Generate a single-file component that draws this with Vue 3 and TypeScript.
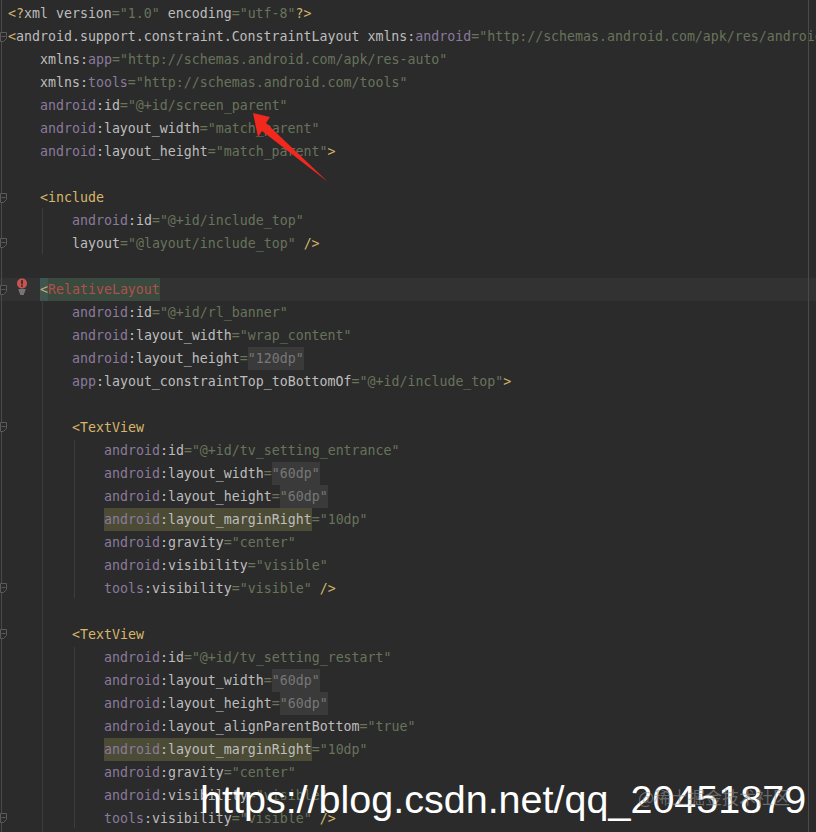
<script setup lang="ts">
type Tok = { cls: string; text: string }
type Line = { indent: number; toks: Tok[]; caret?: boolean }

const tk = (cls: string, text: string): Tok => ({ cls, text })

function attr(indent: number, ns: string, name: string, val: string, end = '', opts: { box?: boolean; warn?: boolean } = {}): Line {
  const toks: Tok[] = []
  if (ns === 'xmlns') {
    toks.push(tk('attr', 'xmlns:'), tk('ns', name))
  } else if (ns) {
    if (opts.warn) {
      toks.push(tk('ns warn', ns), tk('attr warn', ':' + name))
    } else {
      toks.push(tk('ns', ns), tk('attr', ':' + name))
    }
  } else {
    toks.push(tk('attr', name))
  }
  toks.push(tk('str', '='))
  toks.push(tk(opts.box ? 'box' : 'str', `"${val}"`))
  if (end) toks.push(tk('tag', end))
  return { indent, toks }
}
const open = (indent: number, name: string): Line => ({ indent, toks: [tk('tag', '<' + name)] })
const blank = (): Line => ({ indent: 0, toks: [] })

const lines: Line[] = [
  {
    indent: 0,
    toks: [
      tk('tag', '<?'), tk('attr', 'xml version'), tk('str', '="1.0"'), tk('attr', ' encoding'), tk('str', '="utf-8"'), tk('tag', '?>'),
    ],
  },
  {
    indent: 0,
    toks: [
      tk('tag', '<'), tk('attr', 'android.support.constraint.ConstraintLayout xmlns:'), tk('ns', 'android'),
      tk('str', '="http://schemas.android.com/apk/res/android"'),
    ],
  },
  attr(4, 'xmlns', 'app', 'http://schemas.android.com/apk/res-auto'),
  attr(4, 'xmlns', 'tools', 'http://schemas.android.com/tools'),
  attr(4, 'android', 'id', '@+id/screen_parent'),
  attr(4, 'android', 'layout_width', 'match_parent'),
  attr(4, 'android', 'layout_height', 'match_parent', '>'),
  blank(),
  open(4, 'include'),
  attr(8, 'android', 'id', '@+id/include_top'),
  attr(8, '', 'layout', '@layout/include_top', ' />'),
  blank(),
  { indent: 4, caret: true, toks: [tk('match', '<'), tk('err', 'RelativeLayout')] },
  attr(8, 'android', 'id', '@+id/rl_banner'),
  attr(8, 'android', 'layout_width', 'wrap_content'),
  attr(8, 'android', 'layout_height', '120dp', '', { box: true }),
  attr(8, 'app', 'layout_constraintTop_toBottomOf', '@+id/include_top', '>'),
  blank(),
  open(8, 'TextView'),
  attr(12, 'android', 'id', '@+id/tv_setting_entrance'),
  attr(12, 'android', 'layout_width', '60dp', '', { box: true }),
  attr(12, 'android', 'layout_height', '60dp', '', { box: true }),
  attr(12, 'android', 'layout_marginRight', '10dp', '', { warn: true }),
  attr(12, 'android', 'gravity', 'center'),
  attr(12, 'android', 'visibility', 'visible'),
  attr(12, 'tools', 'visibility', 'visible', ' />'),
  blank(),
  open(8, 'TextView'),
  attr(12, 'android', 'id', '@+id/tv_setting_restart'),
  attr(12, 'android', 'layout_width', '60dp', '', { box: true }),
  attr(12, 'android', 'layout_height', '60dp', '', { box: true }),
  attr(12, 'android', 'layout_alignParentBottom', 'true'),
  attr(12, 'android', 'layout_marginRight', '10dp', '', { warn: true }),
  attr(12, 'android', 'gravity', 'center'),
  attr(12, 'android', 'visibility', 'visible'),
  attr(12, 'tools', 'visibility', 'visible', ' />'),
]

const foldMarks = [37, 198, 243, 290, 427, 588, 634, 818].map((y) => ({ y: y - 5 }))
const guides = [
  { x: 42, top: 208, height: 46 },
  { x: 42, top: 300, height: 532 },
  { x: 74, top: 440, height: 158 },
  { x: 74, top: 647, height: 181 },
]
</script>

<template>
  <div class="editor">
    <div class="code">
      <div
        v-for="(line, i) in lines"
        :key="i"
        class="line"
        :class="{ caret: line.caret, ['i' + line.indent]: true }"
      >
        <span v-for="(tok, j) in line.toks" :key="j" :class="tok.cls">{{ tok.text }}</span>
      </div>
    </div>

    <div class="fold-rail"></div>
    <svg
      v-for="(m, i) in foldMarks"
      :key="'f' + i"
      class="fold"
      :style="{ top: m.y + 'px' }"
      width="8"
      height="12"
      viewBox="0 0 8 12"
    >
      <path d="M0.5 0.5H6.5V6.5L3.5 9.5H0.5Z" fill="#2b2b2b" stroke="#5a5a5a" />
      <path d="M1.5 4.5H5.5" stroke="#5a5a5a" />
    </svg>
    <div
      v-for="(g, i) in guides"
      :key="'g' + i"
      class="guide"
      :style="{ left: g.x + 'px', top: g.top + 'px', height: g.height + 'px' }"
    ></div>
    <div class="right-margin"></div>

    <svg class="bulb" width="12" height="18" viewBox="0 0 12 18">
      <path d="M6 0.5C9 0.5 11 2.6 11 5.4C11 8.2 9 10.4 6 10.4C3 10.4 1 8.2 1 5.4C1 2.6 3 0.5 6 0.5Z" fill="#c75450" />
      <path d="M5 2.2H7L6.7 6.4H5.3Z" fill="#2b2b2b" />
      <circle cx="6" cy="8" r="0.9" fill="#2b2b2b" />
      <path d="M2.6 12H9.4M3.2 14H8.8M4 16H8" stroke="#b8b8b8" stroke-width="1.1" />
    </svg>

    <svg class="arrow" width="816" height="832" viewBox="0 0 816 832">
      <path d="M253 113L270 117L266 123L328 182L262 131L258 137Z" fill="#f0281e" />
    </svg>

    <div class="mark-big">https://blog.csdn.net/qq_20451879</div>
    <div class="mark-small">@稀土掘金技术社区</div>
  </div>
</template>

<style>
html,
body {
  margin: 0;
  background: #2b2b2b;
}
</style>

<style scoped>
.editor {
  position: relative;
  width: 816px;
  height: 832px;
  overflow: hidden;
  background: #2b2b2b;
}
.code {
  padding-top: 2px;
  font-family: "DejaVu Sans Mono", "Liberation Mono", monospace;
  font-size: 13.28px;
  color: #bdbdbd;
}
.line {
  height: 23px;
  line-height: 23px;
  padding-left: 8px;
  white-space: pre;
}
.i4 { padding-left: 40px; }
.i8 { padding-left: 72px; }
.i12 { padding-left: 104px; }
.caret { background: #323232; }
.tag { color: #d8b56a; }
.attr { color: #bdbdbd; }
.ns { color: #8a7a9e; }
.str { color: #68735c; }
.box { color: #777; background: #3a3a3a; display: inline-block; height: 23px; }
.warn { background: #4c4c36; display: inline-block; height: 23px; }
.match { color: #c8b070; background: #3f5550; display: inline-block; height: 23px; }
.err { color: #b0504a; background: #3a4a3f; display: inline-block; height: 23px; }
.fold-rail {
  position: absolute;
  left: 1px;
  top: 0;
  bottom: 0;
  width: 1px;
  background: #4a4a4a;
}
.fold { position: absolute; left: 0; }
.guide {
  position: absolute;
  width: 1px;
  background: #3c3c3c;
}
.right-margin {
  position: absolute;
  left: 808px;
  top: 0;
  bottom: 0;
  width: 1px;
  background: #4a4a4a;
}
.bulb { position: absolute; left: 16px; top: 278px; }
.arrow { position: absolute; left: 0; top: 0; pointer-events: none; }
.mark-small {
  position: absolute;
  left: 638px;
  top: 786px;
  font-family: "Noto Sans CJK SC", sans-serif;
  font-size: 17px;
  line-height: 22px;
  color: rgba(150, 150, 150, 0.6);
  white-space: nowrap;
}
.mark-big {
  position: absolute;
  left: 200px;
  top: 774px;
  font-family: "Liberation Sans", Arial, sans-serif;
  font-size: 39.5px;
  line-height: 50px;
  color: #fff;
  white-space: nowrap;
}
</style>
